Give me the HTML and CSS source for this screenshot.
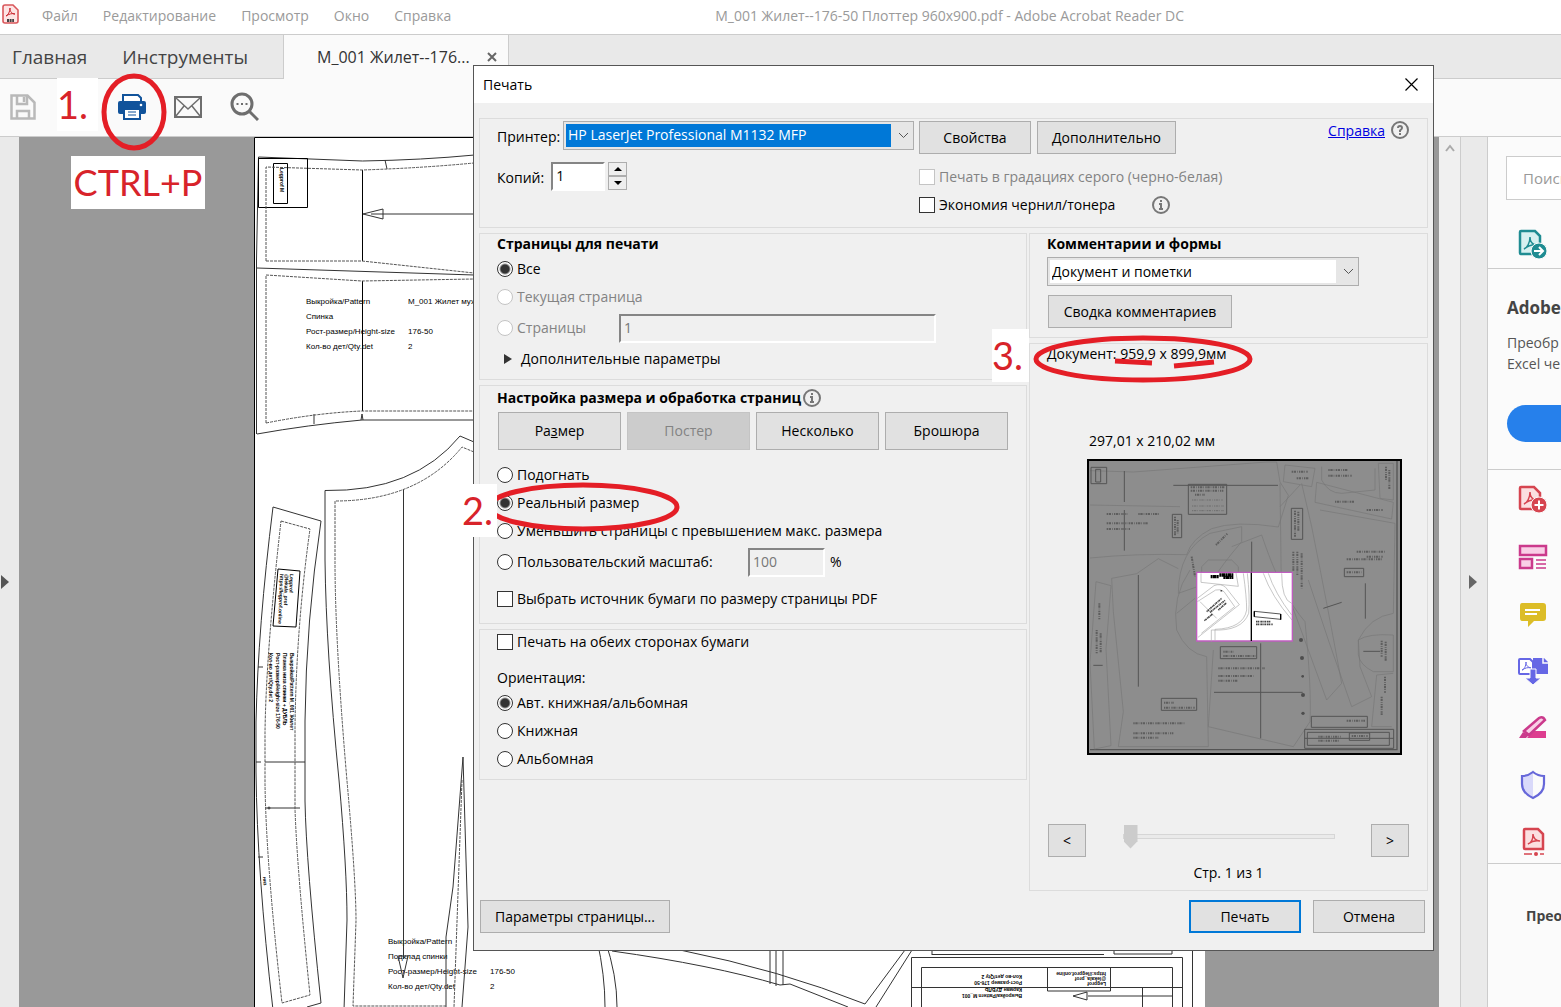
FILE: index.html
```html
<!DOCTYPE html>
<html lang="ru">
<head>
  <meta charset="UTF-8">
  <title>M_001 Жилет--176-50 Плоттер 960x900.pdf - Adobe Acrobat Reader DC</title>
  <meta name="viewport" content="width=device-width, initial-scale=1.0">
  <link rel="stylesheet" href="styles.css">
</head>
<body>
  <header class="menubar">
    <svg class="app-icon" width="17" height="20" viewBox="0 0 17 20">
      <path d="M3 1h8l5 5v11q0 2-2 2H3q-2 0-2-2V3q0-2 2-2z" fill="#fde4e4" stroke="#d9575b" stroke-width="1.6"/>
      <path d="M4 12c2-1 4-4 4-8 0 4 2 6 5 6-3-1-6 0-9 2z" fill="none" stroke="#c9252d"/>
      <path d="M5 16.500h7" stroke="#444" stroke-width="3" stroke-dasharray="2 .6"/>
    </svg>
    <nav class="menu">
      <a href="#">Файл</a>
      <a href="#">Редактирование</a>
      <a href="#">Просмотр</a>
      <a href="#">Окно</a>
      <a href="#">Справка</a>
    </nav>
    <div class="window-title">M_001 Жилет--176-50 Плоттер 960x900.pdf - Adobe Acrobat Reader DC</div>
  </header>

  <nav class="tabs">
    <div class="tabs-main">
      <a href="#">Главная</a>
      <a href="#">Инструменты</a>
    </div>
    <div class="tab-active">
      <a href="#">M_001 Жилет--176...</a>
      <button type="button" class="tab-close" aria-label="Закрыть вкладку">
        <svg width="10" height="10" viewBox="0 0 10 10"><path d="M1 1l8 8M9 1l-8 8" stroke="#666" stroke-width="2"/></svg>
      </button>
    </div>
    <div class="tabs-rest"></div>
  </nav>

  <div class="toolbar">
    <button type="button" class="tool tool-save" aria-label="Сохранить">
      <svg width="26" height="26" viewBox="0 0 26 26" fill="none" stroke="#b9b9b9" stroke-width="2.500">
        <path d="M1.500 1.500h16l7 7v16h-23z"/><path d="M7 1v9h10V1M14 3v5M7 25v-8h12v8"/>
      </svg>
    </button>
    <button type="button" class="tool tool-print" aria-label="Печать">
      <svg width="28" height="28" viewBox="0 0 28 28">
        <path d="M5 8V2h15l3 3v4" fill="#fff" stroke="#11539b" stroke-width="2"/>
        <path d="M2 8h24q2 0 2 2v9q0 2-2 2H2q-2 0-2-2v-9q0-2 2-2z" fill="#11539b"/>
        <path d="M6 16h16v10H6z" fill="#fff" stroke="#11539b" stroke-width="2"/>
        <path d="M10 19h8M10 22h8" stroke="#11539b"/><circle cx="23" cy="12" r="1.300" fill="#fff"/>
      </svg>
    </button>
    <button type="button" class="tool tool-mail" aria-label="Отправить">
      <svg width="28" height="22" viewBox="0 0 28 22" fill="none" stroke="#6e6e6e">
        <path d="M1 1h26v20H1z" stroke-width="2"/>
        <path d="M2 2l12 11L26 2M2 20l8-10M26 20l-8-10" stroke-width="1.500"/>
      </svg>
    </button>
    <button type="button" class="tool tool-search" aria-label="Найти">
      <svg width="29" height="29" viewBox="0 0 29 29" fill="none" stroke="#6e6e6e">
        <circle cx="12" cy="12" r="10" stroke-width="3"/>
        <path d="M19 19l9 9" stroke-width="3"/>
        <path d="M6.500 12h2M11 12h2M15.500 12h2" stroke-width="2"/>
      </svg>
    </button>
    <div class="note note-1">1.</div>
    <svg class="ring ring-1" width="66" height="80" viewBox="0 0 66 80"><ellipse cx="33" cy="40" rx="30" ry="36"/></svg>
    <div class="note note-key">CTRL+P</div>
  </div>

  <main class="workspace">
    <div class="rail">
      <svg width="8" height="14" viewBox="0 0 8 14"><path d="M0 0l8 7-8 7z" fill="#555"/></svg>
    </div>

    <div class="viewer">
      <svg class="paper" width="951" height="870" viewBox="254 137 951 870">
        <path d="M254 137h951v870H254z" fill="#fff"/>
        <path d="M254.500 1007V137.500h951" fill="none" stroke="#000"/>
        <!-- back piece -->
        <g class="cut">
          <path d="M256.500 434V260l2-103 104 4q60-1 112-6"/>
          <path d="M257 434q50-9 105-14h120"/>
          <path d="M257 268l217 7"/>
          <path d="M385 160l2 9"/>
          <path d="M314 414v10M362 414l-1 6M362 414l1 6"/>
          <path d="M371 214h103M363 214l20-5v10z"/>
          <path d="M258.500 158.500h49v49h-49zM273.500 163.500h14v40h-14z" stroke="#000"/>
          <path d="M362.500 170v91M362.500 281v130" stroke="#000"/>
        </g>
        <g class="seam">
          <path d="M266 261V167l96 3q60-2 112-7M266 261h96l112 12"/>
          <path d="M266 423V275l96 6 112-2M266 423q50-10 96-12h112"/>
        </g>
        <g class="plot-text">
          <text x="306" y="304">Выкройка/Pattern</text><text x="408" y="304">M_001 Жилет муж</text>
          <text x="306" y="319">Спинка</text>
          <text x="306" y="334">Рост-размер/Height-size</text><text x="408" y="334">176-50</text>
          <text x="306" y="349">Кол-во дет/Qty.det</text><text x="408" y="349">2</text>
          <text x="388" y="944">Выкройка/Pattern</text>
          <text x="388" y="959">Подклад спинки</text>
          <text x="388" y="974">Рост-размер/Height-size</text><text x="490" y="974">176-50</text>
          <text x="388" y="989">Кол-во дет/Qty.det</text><text x="490" y="989">2</text>
        </g>
        <!-- back lining -->
        <g class="cut">
          <path d="M474 442l-14-6q-46 56-135 54.500V560q1 90 14 220 8 90 8 140l-3 90"/>
          <path d="M403.500 489v470M398 956l5 22 5-22z"/>
          <path d="M463 757l-10 130-7 50v70M463 757l5 170-6 80"/>
        </g>
        <g class="seam">
          <path d="M474 452l-12-5q-44 54-127 54v60q0 80 12 220 9 100 9 140l-3 85h93"/>
          <path d="M462 780l-8 227"/>
        </g>
        <!-- lower facing -->
        <g class="cut">
          <path d="M273 507l48 14q-15 100-16 200v80q1 60 16 202l-14 4M273 507q-15 120-17 215v50q1 100 17 238"/>
          <path d="M265 762h35M265 808h35M256 762h5M300 762h5M258 667h5M258 857h5"/>
          <circle cx="269" cy="808" r="1"/>
          <path d="M278 569l22 2-4 56-23-1z" stroke="#000"/>
        </g>
        <g class="seam">
          <path d="M281 521l29 8q-14 100-15 200v80q2 60 15 186l-28 8q-16-140-17-220v-50q1-80 16-212z"/>
        </g>
        <g class="mini-text">
          <text transform="translate(290 574) rotate(92)">Legprof</text>
          <text transform="translate(285 574) rotate(92)">@lekala_prof</text>
          <text transform="translate(280 574) rotate(92)">https://legprof.online</text>
          <text transform="translate(290 653) rotate(90)">Выкройка/Pattern M_001 Жилет</text>
          <text transform="translate(283 653) rotate(90)">Планка низа спинки + ДУБЛЬ</text>
          <text transform="translate(276 653) rotate(90)">Рост-размер/Height-size 176-50</text>
          <text transform="translate(269 653) rotate(90)">Кол-во дет/Qty.det 2</text>
          <text transform="translate(280 168) rotate(90)">Legprof M</text>
          <text transform="translate(263 877) rotate(86)">низ</text>
        </g>
        <!-- pieces below the dialog -->
        <g class="cut">
          <path d="M597 940q8 35 8 67M605 940q12 35 12 67"/>
          <path d="M612 951q100 14 168 34l10-1 58 23M680 950q100 20 185 54l40-54M876 1007l36-57"/>
          <path d="M770 940v44M776 940v46M783 940v45"/>
          <path d="M932 954.500h172M932 950v5M1114 950v4h58v-4"/>
          <path d="M911.500 1007v-49.500h271V1007M921.500 1007v-39.500h251V1007M912 987.500h270M1142.500 987v20M1047.500 968v23h63v-23M1192.500 950v57"/>
          <path d="M1173 996h-85M1073 996l14-4v8z"/>
        </g>
        <g class="mini-text">
          <text transform="translate(1022 994) rotate(180)">Выкройка/Pattern M_001</text>
          <text transform="translate(1022 988) rotate(180)">Карман ДУБЛЬ</text>
          <text transform="translate(1022 981) rotate(180)">Рост-размер 176-50</text>
          <text transform="translate(1022 975) rotate(180)">Кол-во дет/Qty 2</text>
          <text transform="translate(1106 982) rotate(180)">Legprof</text>
          <text transform="translate(1106 977) rotate(180)">@lekala_prof</text>
          <text transform="translate(1106 972) rotate(180)">https://legprof.online</text>
        </g>
      </svg>
    </div>

    <div class="scrollbar">
      <svg width="10" height="8" viewBox="0 0 10 8"><path d="M1 7l4-5 4 5" fill="none" stroke="#aaa" stroke-width="2"/></svg>
    </div>
    <div class="splitter">
      <svg width="8" height="14" viewBox="0 0 8 14"><path d="M0 0l8 7-8 7z" fill="#666"/></svg>
    </div>

    <aside class="tools-panel">
      <section class="tools-find">
        <input type="text" class="find-input" placeholder="Поиск" aria-label="Поиск">
        <svg width="30" height="30" viewBox="0 0 30 30">
          <path d="M3 2h14l5 5v18H3q-1 0-1-1V3q0-1 1-1z" fill="#d6f0f0" stroke="#1f8c92" stroke-width="2.500"/>
          <path d="M6 20c3-1 6-6 6-12 0 5 3 8 7 8-4-1-9 1-13 4z" fill="none" stroke="#1f8c92" stroke-width="1.500"/>
          <circle cx="21" cy="22" r="8" fill="#1f8c92" stroke="#fbfbfb"/>
          <path d="M16 22h8M21 18l4 4-4 4" fill="none" stroke="#fff" stroke-width="2"/>
        </svg>
      </section>
      <section class="tools-promo">
        <h2>Adobe</h2>
        <p>Преобр<br>Excel че</p>
        <button type="button" class="promo-btn" aria-label="Подробнее"></button>
      </section>
      <section class="tools-list">
        <svg width="30" height="30" viewBox="0 0 30 30">
          <path d="M3 2h13l6 6v16H3q-1 0-1-1V3q0-1 1-1z" fill="#fbdfe0" stroke="#d64550" stroke-width="2.500"/>
          <path d="M6 19c3-1 6-6 6-12 0 5 3 8 7 8-4-1-9 1-13 4z" fill="none" stroke="#d64550" stroke-width="1.500"/>
          <circle cx="21" cy="20" r="8" fill="#d64550" stroke="#fbfbfb"/>
          <path d="M16.500 20h9M21 15.500v9" stroke="#fff" stroke-width="2"/>
        </svg>
        <svg width="30" height="30" viewBox="0 0 30 30" fill="#f9cfe6" stroke="#cb3a8c" stroke-width="2.500">
          <path d="M2 4h26v9H2zM2 17h12v9H2z"/><path d="M18 18h10M18 22h10M18 26h10" stroke-width="1.500"/>
        </svg>
        <svg width="30" height="30" viewBox="0 0 30 30">
          <path d="M4 4h21q3 0 3 3v12q0 3-3 3h-9l-6 6v-6H4q-2 0-2-3V7q0-3 2-3z" fill="#dcbd27"/>
          <path d="M7 11h15M7 15h12" stroke="#fff" stroke-width="2"/>
        </svg>
        <svg width="30" height="30" viewBox="0 0 30 30">
          <path d="M15 2h11l4 4v12H15z" fill="#6667e5"/><path d="M25 1v6h6" fill="none" stroke="#fbfbfb" stroke-width="1.500"/>
          <path d="M2 3h10l3 3v12H2q-1 0-1-1V4q0-1 1-1z" fill="#fff" stroke="#6667e5" stroke-width="2"/>
          <path d="M4 14c2 0 4-4 4-8 0 4 2 5 5 6-3-1-6 0-9 2z" fill="none" stroke="#6667e5"/>
          <path d="M12 13h6v9h5l-8 7-8-7h5z" fill="#6667e5" stroke="#fbfbfb"/>
        </svg>
        <svg width="30" height="30" viewBox="0 0 30 30">
          <path d="M15 18h13v7H9z" fill="#dd3d8f"/><path d="M1 25l4-6 6 3-3 3z" fill="#cb3a8c"/>
          <path d="M6 18L21 5q4-2 6 2L11 22z" fill="#f9cfe6" stroke="#cb3a8c" stroke-width="2.500"/>
        </svg>
        <svg width="30" height="30" viewBox="0 0 30 30">
          <path d="M15 3v24q-11-5-11-14V6q7 0 11-3z" fill="#d9d9fa"/>
          <path d="M15 2q5 4 11 4v8q0 9-11 14Q4 23 4 14V6q6 0 11-4z" fill="none" stroke="#6667d9" stroke-width="2.200"/>
        </svg>
        <svg width="30" height="30" viewBox="0 0 30 30">
          <path d="M7 2h13l5 5v15H7q-1 0-1-1V3q0-1 1-1z" fill="#fbdfe0" stroke="#d64550" stroke-width="2.500"/>
          <path d="M10 17c3-1 5-5 5-10 0 4 3 7 7 7-4-1-8 0-12 3z" fill="none" stroke="#d64550" stroke-width="1.500"/>
          <path d="M6 27h8M22 27h4" stroke="#d64550" stroke-width="1.500"/><circle cx="18" cy="27" r="2" fill="#d64550"/>
        </svg>
      </section>
      <section class="tools-bottom">Прео</section>
    </aside>
  </main>

  <form class="dialog" role="dialog" aria-label="Печать">
    <div class="dialog-title">
      <span>Печать</span>
      <button type="button" class="dialog-close" aria-label="Закрыть">
        <svg width="13" height="13" viewBox="0 0 13 13"><path d="M.5.5l12 12M12.500.5l-12 12" stroke="#000" stroke-width="1.200"/></svg>
      </button>
    </div>

    <div class="dialog-body">
      <section class="panel printer">
        <div class="printer-left">
          <div class="field">
            <label for="printer">Принтер:</label>
            <div class="select-box printer-select">
              <select id="printer"><option>HP LaserJet Professional M1132 MFP</option></select>
              <svg width="11" height="7" viewBox="0 0 11 7"><path d="M1 1l4.500 4.500L10 1" fill="none" stroke="#555"/></svg>
            </div>
          </div>
          <div class="field copies">
            <label for="copies">Копий:</label>
            <input type="text" id="copies" class="box" value="1">
            <div class="spinner">
              <button type="button" aria-label="Больше"><svg width="8" height="4" viewBox="0 0 8 4"><path d="M0 4l4-4 4 4z"/></svg></button>
              <button type="button" aria-label="Меньше"><svg width="8" height="4" viewBox="0 0 8 4"><path d="M0 0l4 4 4-4z"/></svg></button>
            </div>
          </div>
        </div>
        <div class="printer-right">
          <div class="btn-row">
            <button type="button" class="btn btn-props">Свойства</button>
            <button type="button" class="btn btn-more">Дополнительно</button>
          </div>
          <label class="check off"><input type="checkbox" disabled>Печать в градациях серого (черно-белая)</label>
          <div class="with-info">
            <label class="check"><input type="checkbox">Экономия чернил/тонера</label>
            <svg class="info" width="18" height="18" viewBox="0 0 18 18"><circle cx="9" cy="9" r="8"/><path d="M9 4v2M7 8h2v5M7 13h4"/></svg>
          </div>
        </div>
        <div class="help">
          <a href="#">Справка</a>
          <svg class="info" width="18" height="18" viewBox="0 0 18 18"><circle cx="9" cy="9" r="8"/><path d="M7 7q0-2 2-2t2 2q0 1-2 2.500V11M9 12v2"/></svg>
        </div>
      </section>

      <div class="columns">
        <div class="col-left">
          <section class="panel">
            <h3>Страницы для печати</h3>
            <label class="check"><input type="radio" name="pages" checked>Все</label>
            <label class="check off"><input type="radio" name="pages" disabled>Текущая страница</label>
            <div class="field range">
              <label class="check off"><input type="radio" name="pages" disabled>Страницы</label>
              <input type="text" class="box" value="1" disabled aria-label="Диапазон страниц">
            </div>
            <button type="button" class="expander">
              <svg width="8" height="10" viewBox="0 0 8 10"><path d="M0 0l8 5-8 5z" fill="#333"/></svg>
              Дополнительные параметры
            </button>
          </section>

          <section class="panel sizing">
            <h3>Настройка размера и обработка страниц
              <svg class="info" width="18" height="18" viewBox="0 0 18 18"><circle cx="9" cy="9" r="8"/><path d="M9 4v2M7 8h2v5M7 13h4"/></svg>
            </h3>
            <div class="modes">
              <button type="button" class="btn">Ра<u>з</u>мер</button>
              <button type="button" class="btn" disabled>Постер</button>
              <button type="button" class="btn">Несколько</button>
              <button type="button" class="btn">Брошюра</button>
            </div>
            <label class="check"><input type="radio" name="size">Подогнать</label>
            <label class="check"><input type="radio" name="size" checked>Реальный размер</label>
            <label class="check"><input type="radio" name="size">Уменьшить страницы с превышением макс. размера</label>
            <div class="field scale">
              <label class="check"><input type="radio" name="size">Пользовательский масштаб:</label>
              <input type="text" class="box" value="100" disabled aria-label="Масштаб">
              <span>%</span>
            </div>
            <label class="check source"><input type="checkbox">Выбрать источник бумаги по размеру страницы PDF</label>
          </section>

          <section class="panel orient">
            <label class="check"><input type="checkbox">Печать на обеих сторонах бумаги</label>
            <p>Ориентация:</p>
            <label class="check"><input type="radio" name="orient" checked>Авт. книжная/альбомная</label>
            <label class="check"><input type="radio" name="orient">Книжная</label>
            <label class="check"><input type="radio" name="orient">Альбомная</label>
          </section>
        </div>

        <div class="col-right">
          <section class="panel comments">
            <h3><label for="comments">Комментарии и формы</label></h3>
            <div class="select-box">
              <select id="comments"><option>Документ и пометки</option></select>
              <svg width="11" height="7" viewBox="0 0 11 7"><path d="M1 1l4.500 4.500L10 1" fill="none" stroke="#555"/></svg>
            </div>
            <button type="button" class="btn btn-summary">Сводка комментариев</button>
          </section>

          <section class="panel preview">
            <p>Документ: 959,9 x 899,9мм</p>
            <figure>
              <figcaption>297,01 x 210,02 мм</figcaption>
              <svg width="315" height="296" viewBox="21 27 945 888">
                <path d="M24 30h939v882H24z" fill="#8d8d8d" stroke="#000" stroke-width="6"/>
                <path d="M951 33v866H30" fill="none" stroke="#555" stroke-width="4"/>
                <g fill="none" stroke="#777" stroke-width="2">
                  <path d="M30 62l130 4 400-30h30l10 60 25 40-30 95q-130-20-200 5-60 30-75 78-150-4-290 10M30 165l270 5"/>
                  <path d="M95 385l75-14 65-45 60 30M95 385l5 100 30 300-15 105h270l-5-270q-60-10-90-80-15-100 40-180"/>
                  <path d="M48 395l45 12-15 190 15 290-50 10-13-260zM290 490l55-45M295 430q0-130 95-180l95-20v45q-60 70-90 120zM365 395v-45l20-20h70l20 20v60z"/>
                  <path d="M455 290l90-35q60 180 130 260 20 200 15 300l-50 75-255-60 15-230M600 100l5 390M600 170l60-65M665 100l30 130q50 250 90 470l-45 50-110-300"/>
                  <path d="M710 97l230 60-5 50-230-50zM725 50v40q20 40 60 40l100-10V55M895 40h45v110l-40-5zM720 180l225 40-5 270q-70 10-105 80l5 80 35 90-60 30-70-200-60-180"/>
                  <path d="M835 570q30-20 105-15v110h-60q-40-20-45-50zM940 670l-50 5-15 155h60M610 95l5-50 90 10-10 55z"/>
                </g>
                <g fill="none" stroke="#555" stroke-width="3">
                  <path d="M133 63v93M133 180v122M280 106h314M175 375v335M542 580v285M402 727h266M856 400v106M40 646h28M515 275v92M850 604h50M730 475l55-18"/>
                  <path d="M33 52h47v49H33zM47 58h15v38H47zM325 103h115v90H325zM277 193h28v70h-28zM634 175h34v93h-34zM793 355h58v25h-58zM421 590h109v36H421zM244 745h106v36H244zM694 799h168v33H694zM674 838h267v57H674zM682 847h246v39H682zM674 865h267M808 849h61v22h-61z"/>
                </g>
                <g fill="none" stroke="#5e5e5e" stroke-width="6" stroke-dasharray="4 2 7 3 2 4">
                  <path d="M332 112h102M332 122h98M345 134h30M80 192h62M175 192h66M80 220h125M80 237h70M285 200v56M293 210v40M645 182v78M655 185v60M640 305v60M652 305v70M665 310v105"/>
                  <path d="M745 60h60M745 77h70M765 155h60M860 180h50M830 305h85M860 320h50M800 328h108M800 367h45M335 320l10 60M408 285l35-35M635 65h50M650 85h35M918 50v40M928 60v60"/>
                  <path d="M415 655h140M415 678h105M415 692h60M430 605h30M430 618h96M252 758h30M252 773h92M160 820h155M160 850h120M160 863h75M58 460v50M50 540v70M62 550v60"/>
                  <path d="M905 572v50M917 575v60M905 740v55M915 680v50M800 812h55M715 860h68M715 872h65M815 858h50"/>
                  <path d="M336 150h94M336 168h96M336 182h96" stroke-width="2"/>
                </g>
                <g fill="#4d4d4d"><circle cx="663" cy="570" r="6"/><circle cx="666" cy="624" r="6"/><circle cx="668" cy="679" r="4"/><circle cx="669" cy="735" r="6"/><circle cx="669" cy="790" r="5"/></g>
                <path d="M350 367h287v206H350z" fill="#fff" stroke="#c05cc0" stroke-width="4"/>
                <g fill="none" stroke="#aaa" stroke-width="2">
                  <path d="M363 370v27l112 12-7-40M352 445l50-38q20-8 35 5l41 52-124 98M352 455l55-35q15-4 25 5l32 45-100 80"/>
                  <path d="M490 370q10 70 10 110-10 55-95 58v34M502 370q8 70 4 120-20 55-112 50v34M550 370q25 70 86 140M565 370q20 60 70 125M605 370q0 80 30 90M360 455l50 50"/>
                </g>
                <path d="M514 368v205M523 484v16M602 492v17" fill="none" stroke="#000" stroke-width="4"/>
                <path d="M523 484l79 8v16l-79-8z" fill="none" stroke="#000" stroke-width="2"/>
                <path d="M392 380h25M418 375h42M430 382h30" fill="none" stroke="#000" stroke-width="10" stroke-dasharray="5 1 12 1"/>
                <path d="M380 485l45-40M390 487l45-36M415 480l25-22M373 512l25-20M528 515h45M528 523h50M424 420v5" fill="none" stroke="#444" stroke-width="5" stroke-dasharray="3 1 5 2"/>
              </svg>
            </figure>
            <div class="pager">
              <button type="button" class="btn">&lt;</button>
              <input type="range" min="0" max="10" value="0" disabled aria-label="Страница">
              <button type="button" class="btn">&gt;</button>
            </div>
            <p class="page-count">Стр. 1 из 1</p>
          </section>
        </div>
      </div>

      <div class="dialog-footer">
        <button type="button" class="btn btn-setup">Параметры страницы...</button>
        <button type="submit" class="btn btn-primary">Печать</button>
        <button type="button" class="btn btn-cancel">Отмена</button>
      </div>
    </div>

    <svg class="ring ring-2" width="200" height="56" viewBox="0 0 200 56"><ellipse cx="100" cy="28" rx="94" ry="22"/></svg>
    <div class="note note-2">2.</div>
    <svg class="ring ring-3" width="220" height="50" viewBox="0 0 220 50">
      <ellipse cx="110" cy="25" rx="107" ry="21"/><path d="M82 27l37 2M141 32l40-4"/>
    </svg>
    <div class="note note-3">3.</div>
  </form>
</body>
</html>
```
FILE: styles.css
```css
* {
  box-sizing: border-box;
}

body {
  margin: 0;
  height: 100vh;
  display: flex;
  flex-direction: column;
  overflow: hidden;
  position: relative;
  background: #fafafa;
  color: #000;
  font-family: "Open Sans", "Noto Sans", sans-serif;
  font-size: 14px;
  line-height: 20px;
}

a {
  color: inherit;
  text-decoration: none;
}

svg {
  display: block;
  flex: none;
}

h2, h3, p, figure {
  margin: 0;
}

button, input, select {
  font: inherit;
  color: inherit;
  border-radius: 0;
}

/* Menu, tabs and toolbar */
.menubar {
  flex: none;
  height: 35px;
  display: flex;
  align-items: flex-start;
  padding: 4px 0 0 2px;
  background: #fff;
  border-bottom: 1px solid #ccc;
  color: #9a9a9a;
  white-space: nowrap;
}

.menu {
  display: flex;
  gap: 25px;
  padding: 2px 0 0 23px;
}

.window-title {
  padding-top: 2px;
  margin-left: 264px;
}

.tabs {
  flex: none;
  height: 44px;
  display: flex;
  background: #e9e9e9;
  color: #444;
}

.tabs-main {
  width: 284px;
  display: flex;
  align-items: center;
  gap: 35px;
  padding-left: 12px;
  font-size: 19px;
  border-right: 1px solid #ccc;
  border-bottom: 1px solid #ccc;
}

.tab-active {
  width: 225px;
  display: flex;
  align-items: center;
  justify-content: space-between;
  padding: 0 11px 0 33px;
  font-size: 16px;
  color: #333;
  background: #fafafa;
  border-right: 1px solid #ccc;
}

.tab-close, .dialog-close, .tool {
  padding: 0;
  border: none;
  background: none;
}

.tabs-rest {
  flex: 1;
  border-bottom: 1px solid #ccc;
}

.toolbar {
  flex: none;
  height: 58px;
  position: relative;
  display: flex;
  align-items: center;
  gap: 28px;
  padding: 0 0 2px 10px;
  border-bottom: 1px solid #ccc;
}

.tool-print {
  margin-left: 54px;
}

/* Red marks over the window */
.note {
  position: absolute;
  z-index: 2;
  background: #fff;
  color: #d8232a;
  font-family: Lato, sans-serif;
  font-size: 38px;
  line-height: 53px;
  white-space: nowrap;
}

.note-1 {
  left: 57px;
  top: -1px;
  width: 41px;
}

.note-key {
  left: 71px;
  top: 77px;
  width: 134px;
  font-size: 36px;
  text-align: center;
}

.note-2 {
  left: -12px;
  top: 418px;
  width: 35px;
}

.note-3 {
  left: 518px;
  top: 263px;
  width: 37px;
}

.ring {
  position: absolute;
  z-index: 1;
  fill: none;
  stroke: #e41e26;
  stroke-width: 5;
  pointer-events: none;
}

.ring-1 {
  left: 101px;
  top: -7px;
  z-index: 3;
}

.ring-2 {
  left: 9px;
  top: 413px;
}

.ring-3 {
  left: 559px;
  top: 268px;
}

/* Document area */
.workspace {
  flex: 1;
  min-height: 0;
  display: flex;
}

.rail {
  width: 19px;
  display: flex;
  align-items: center;
  padding: 20px 0 0 1px;
  background: #eaeaea;
}

.viewer {
  flex: 1;
  min-width: 0;
  overflow: hidden;
  padding-left: 235px;
  background: #999;
}

.cut {
  fill: none;
  stroke: #333;
}

.seam {
  fill: none;
  stroke: #555;
  stroke-dasharray: 3 1;
}

.plot-text {
  font-family: "Liberation Sans", sans-serif;
  font-size: 8px;
}

.mini-text {
  font-family: "Liberation Sans", sans-serif;
  font-size: 5px;
  font-weight: bold;
}

.scrollbar {
  width: 22px;
  display: flex;
  justify-content: center;
  padding-top: 7px;
  background: #f0f0f0;
  border-right: 1px solid #ccc;
}

.splitter {
  width: 27px;
  display: flex;
  align-items: center;
  padding: 20px 0 0 8px;
  background: #eaeaea;
  border-right: 1px solid #ccc;
}

.tools-panel {
  width: 73px;
  overflow: hidden;
  background: #fbfbfb;
  color: #555;
  white-space: nowrap;
}

.tools-panel section {
  border-bottom: 1px solid #ccc;
}

.tools-find {
  height: 132px;
  padding: 19px 0 0 18px;
}

.find-input {
  width: 90px;
  height: 44px;
  margin-bottom: 29px;
  padding: 0 16px;
  border: 1px solid #ccc;
  background: #fff;
  font-size: 15px;
}

.find-input::placeholder {
  color: #999;
}

.tools-find svg {
  margin-left: 12px;
}

.tools-promo {
  height: 201px;
  padding: 28px 0 0 19px;
}

.tools-promo h2 {
  margin-bottom: 13px;
  font-size: 17px;
  line-height: 22px;
  color: #444;
}

.tools-promo p {
  line-height: 21px;
}

.promo-btn {
  display: block;
  width: 120px;
  height: 37px;
  margin-top: 31px;
  border: none;
  border-radius: 19px;
  background: #2680eb;
}

.tools-list {
  height: 394px;
  display: flex;
  flex-direction: column;
  gap: 27px;
  padding: 15px 0 0 30px;
}

.tools-panel .tools-bottom {
  padding: 42px 0 0 38px;
  border-bottom: none;
  font-weight: bold;
  color: #444;
}

/* Print dialog */
.dialog {
  position: absolute;
  left: 473px;
  right: 127px;
  top: 65px;
  background: #f0f0f0;
  border: 1px solid #555;
}

.dialog-title {
  height: 37px;
  display: flex;
  align-items: center;
  justify-content: space-between;
  padding: 0 15px 0 9px;
  background: #fff;
}

.dialog-body {
  display: flex;
  flex-direction: column;
  gap: 5px;
  padding: 15px 5px 17px;
}

.panel {
  border: 1px solid #dcdcdc;
}

.printer {
  height: 110px;
  display: flex;
  gap: 5px;
  padding: 2px 18px 0 17px;
}

.printer-left {
  width: 417px;
}

.field {
  display: flex;
  align-items: center;
}

.printer-left .field {
  height: 28px;
  justify-content: space-between;
}

.printer-left label {
  padding-top: 4px;
}

.printer-left .copies {
  justify-content: flex-start;
  margin-top: 13px;
}

.copies .box {
  width: 54px;
  margin: 0 3px 0 7px;
}

.select-box {
  position: relative;
}

.select-box select {
  appearance: none;
  width: 100%;
  height: 29px;
  padding: 0 24px 0 4px;
  border: 1px solid #adadad;
  background: linear-gradient(#fff, #fff) 2px 2px / calc(100% - 24px) calc(100% - 4px) no-repeat #e6e6e6;
}

.select-box svg {
  position: absolute;
  right: 5px;
  top: 11px;
}

.printer-select {
  width: 351px;
}

.printer-select select {
  color: #fff;
  background-image: linear-gradient(#0078d7, #0078d7);
}

.box {
  height: 29px;
  padding: 0 3px 2px;
  background: #fff;
  border: 2px solid;
  border-color: #858585 #fff #fff #858585;
}

.box:disabled {
  background: #f0f0f0;
  color: #777;
}

.spinner {
  display: flex;
  flex-direction: column;
}

.spinner button {
  width: 19px;
  height: 14px;
  display: flex;
  align-items: center;
  justify-content: center;
  padding: 0;
  background: #eee;
  border: 1px solid #adadad;
}

.btn {
  height: 33px;
  padding: 0;
  background: #e1e1e1;
  border: 1px solid #adadad;
}

.btn:disabled {
  background: #ccc;
  border-color: #c4c4c4;
  color: #838383;
}

.btn-row {
  display: flex;
  gap: 6px;
  margin-bottom: 9px;
}

.btn-props {
  width: 112px;
}

.btn-more {
  width: 139px;
}

.check {
  height: 28px;
  display: flex;
  align-items: center;
  gap: 4px;
  white-space: nowrap;
}

.off {
  color: #838383;
}

.check input {
  appearance: none;
  flex: none;
  width: 16px;
  height: 16px;
  margin: 0;
  background: #fff;
  border: 1px solid #333;
}

.check input[type="radio"] {
  border-radius: 50%;
}

.check input[type="radio"]:checked {
  background: radial-gradient(circle, #333 4px, #fff 6px);
}

.check input:disabled {
  border-color: #c4c4c4;
}

.with-info {
  display: flex;
  align-items: center;
  gap: 37px;
}

.info {
  fill: none;
  stroke: #777;
  stroke-width: 2;
}

.help {
  display: flex;
  gap: 6px;
  margin-left: auto;
}

.help a {
  color: #0000e0;
  text-decoration: underline;
}

.columns {
  display: flex;
  gap: 2px;
}

.col-left {
  flex: 1;
  min-width: 0;
  display: flex;
  flex-direction: column;
  gap: 5px;
}

.col-right {
  width: 399px;
  display: flex;
  flex-direction: column;
  gap: 5px;
}

.col-left .panel, .col-right .panel {
  padding: 0 17px;
}

h3 {
  display: flex;
  align-items: center;
  gap: 2px;
  margin-bottom: 1px;
  font-size: 14px;
  line-height: 20px;
}

.range {
  height: 34px;
}

.range .check {
  width: 122px;
}

.range .box {
  width: 317px;
}

.expander {
  height: 28px;
  display: flex;
  align-items: center;
  gap: 9px;
  margin-bottom: 6px;
  padding: 0 0 0 7px;
  border: none;
  background: none;
}

.sizing h3 {
  padding-top: 2px;
}

.modes {
  display: flex;
  gap: 6px;
  margin: 4px 0 11px 1px;
}

.modes .btn {
  width: 123px;
  height: 38px;
}

.scale {
  height: 34px;
}

.scale .check {
  width: 251px;
}

.scale .box {
  width: 77px;
  margin-right: 5px;
}

.source {
  margin: 6px 0 10px;
}

.orient {
  height: 151px;
}

.orient .check:first-child {
  height: 24px;
}

.orient p {
  margin: 14px 0 1px;
}

.comments {
  height: 105px;
}

.comments .select-box {
  width: 312px;
  margin: 3px 0 9px;
}

.btn-summary {
  width: 184px;
  margin-left: 1px;
}

.col-right .preview {
  flex: 1;
  padding-bottom: 7px;
}

.preview figure {
  margin: 67px 0 69px 40px;
}

.preview figcaption {
  padding-left: 2px;
  margin-bottom: 8px;
}

.pager {
  display: flex;
  justify-content: space-between;
  width: 361px;
  margin-left: 1px;
}

.pager .btn {
  width: 38px;
}

.pager input {
  appearance: none;
  width: 212px;
  height: 24px;
  margin: 0;
  background: none;
}

.pager input::-webkit-slider-runnable-track {
  height: 5px;
  background: #eaeaea;
  border: 1px solid #d6d6d6;
}

.pager input::-webkit-slider-thumb {
  appearance: none;
  width: 14px;
  height: 24px;
  margin-top: -10px;
  background: #ccc;
  clip-path: polygon(0 0, 100% 0, 100% 70%, 50% 100%, 0 70%);
}

.page-count {
  margin-top: 6px;
  text-align: center;
}

.dialog-footer {
  display: flex;
  gap: 12px;
  padding: 4px 3px 0 1px;
}

.btn-setup {
  width: 190px;
  margin-right: auto;
}

.btn-primary, .btn-cancel {
  width: 112px;
}

.btn-primary {
  border: 2px solid #0078d7;
}
```
